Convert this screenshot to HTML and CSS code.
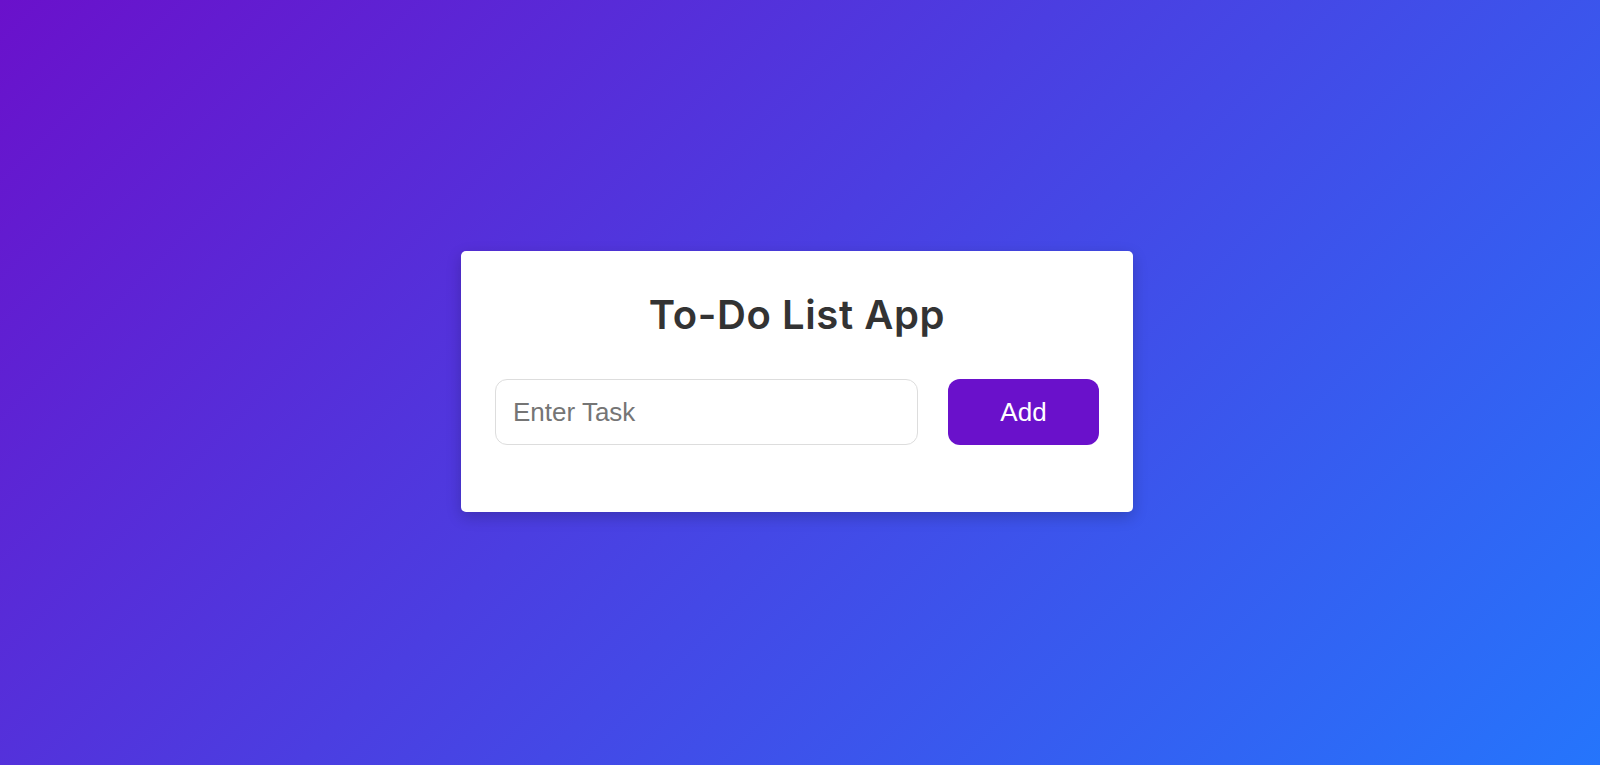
FILE: index.html
```html
<!DOCTYPE html>
<html lang="en">
<head>
<meta charset="UTF-8">
<title>To-Do List App</title>
<link rel="stylesheet" href="styles.css">
</head>
<body>
<div class="page">
  <div class="card">
    <h2 class="title">To-Do List App</h2>
    <div class="row">
      <input class="task-input" type="text" placeholder="Enter Task">
      <button class="add-btn">Add</button>
    </div>
    <ul class="list"></ul>
  </div>
</div>
</body>
</html>
```

FILE: styles.css
```css
* { box-sizing: border-box; }
html, body { margin: 0; padding: 0; height: 100%; }
body {
  background: linear-gradient(135deg, #6a11cb 0%, #2575fc 100%);
  font-family: "Liberation Sans", Arial, sans-serif;
}
.page {
  height: 100%;
  display: flex;
  align-items: center;
  justify-content: center;
  padding-right: 6px;
  padding-bottom: 2px;
}
.card {
  width: 672px;
  background: #fff;
  border-radius: 5px;
  padding: 34px 34px 40px;
  box-shadow: 0 5px 15px rgba(0,0,0,0.2);
}
.title {
  margin: 0 0 34px;
  text-align: center;
  font-family: Inter, "Open Sans", sans-serif;
  font-weight: 600;
  font-size: 40px;
  line-height: 60px;
  color: #333;
  letter-spacing: 0.6px;
}
.row {
  display: flex;
  gap: 30px;
}
.task-input {
  flex: 1;
  height: 66px;
  border: 1px solid #ddd;
  border-radius: 12px;
  padding: 0 17px;
  font-family: "Liberation Sans", Arial, sans-serif;
  font-size: 26px;
  color: #333;
  outline: none;
}
.task-input::placeholder { color: #757575; }
.add-btn {
  width: 151px;
  height: 66px;
  border: none;
  border-radius: 12px;
  background: #6a11cb;
  color: #fff;
  font-family: "Liberation Sans", Arial, sans-serif;
  font-size: 26px;
}
.list {
  margin: 0;
  padding: 0;
  list-style: none;
  height: 27px;
}
```
